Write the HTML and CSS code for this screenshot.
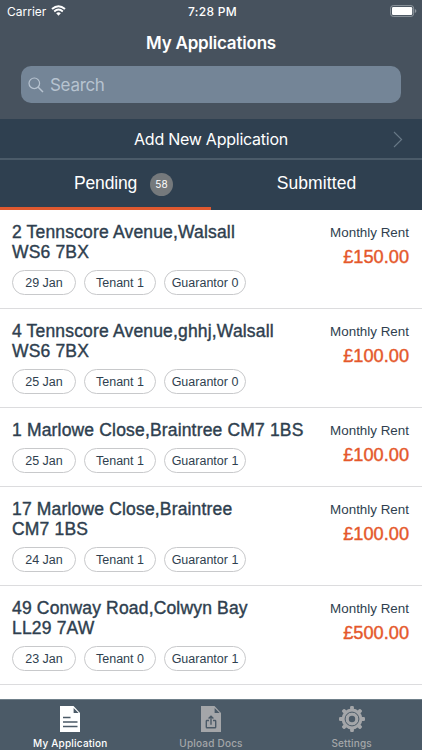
FILE: index.html
```
<!DOCTYPE html>
<html lang="en">
<head>
    <meta charset="utf-8">
    <meta name="viewport" content="width=device-width, initial-scale=1">
    <title>My Applications</title>
    <link rel="stylesheet" href="styles.css">
</head>
<body>
    <header class="header">
        <div class="status-bar">
            <div class="carrier">
                <span>Carrier</span>
                <svg class="wifi" width="15" height="11" viewBox="0 0 15 11">
                    <path d="M1 4 Q7.5 -1.6 14 4" fill="none" stroke="#fff" stroke-width="2"/>
                    <path d="M3.2 6.4 Q7.5 2.8 11.8 6.4" fill="none" stroke="#fff" stroke-width="1.9"/>
                    <path d="M5.2 8.3 Q7.5 6.4 9.8 8.3 L7.5 10.7Z" fill="#fff"/>
                </svg>
            </div>
            <span class="time">7:28 PM</span>
            <svg class="battery" width="27" height="12" viewBox="0 0 27 12">
                <rect x="0.6" y="0.6" width="23" height="10.8" rx="2.6" fill="none" stroke="#8f979e" stroke-width="1"/>
                <rect x="2" y="2" width="20.2" height="8" rx="1.2" fill="#fff"/>
                <path d="M24.8 4 Q26.4 4.6 26.4 6 Q26.4 7.4 24.8 8Z" fill="#8f979e"/>
            </svg>
        </div>
        <h1>My Applications</h1>
        <div class="search">
            <svg width="16" height="16" viewBox="0 0 16 16" fill="none" stroke="#b7c3d0" stroke-width="1.2">
                <circle cx="6.3" cy="6.3" r="5.3"/>
                <path d="M10.2 10.2 L15 15" stroke-width="1.5"/>
            </svg>
            <span>Search</span>
        </div>
    </header>

    <a class="add-new">
        <span>Add New Application</span>
        <svg class="chevron" width="10" height="17" viewBox="0 0 10 17">
            <path d="M1 1 L8.6 8.5 L1 16" fill="none" stroke="#687987" stroke-width="1.1"/>
        </svg>
    </a>

    <nav class="tabs">
        <div class="tab active"><span class="pending">Pending</span><span class="badge">58</span></div>
        <div class="tab"><span class="submitted">Submitted</span></div>
    </nav>

    <main class="list">
        <div class="row">
            <div class="info">
                <h2>2 Tennscore Avenue,Walsall<br>WS6 7BX</h2>
                <div class="chips"><span class="chip date">29 Jan</span><span class="chip tenant">Tenant 1</span><span class="chip guarantor">Guarantor 0</span></div>
            </div>
            <div class="rent"><p>Monthly Rent</p><strong>£150.00</strong></div>
        </div>
        <div class="row">
            <div class="info">
                <h2>4 Tennscore Avenue,ghhj,Walsall<br>WS6 7BX</h2>
                <div class="chips"><span class="chip date">25 Jan</span><span class="chip tenant">Tenant 1</span><span class="chip guarantor">Guarantor 0</span></div>
            </div>
            <div class="rent"><p>Monthly Rent</p><strong>£100.00</strong></div>
        </div>
        <div class="row">
            <div class="info">
                <h2>1 Marlowe Close,Braintree CM7 1BS</h2>
                <div class="chips"><span class="chip date">25 Jan</span><span class="chip tenant">Tenant 1</span><span class="chip guarantor">Guarantor 1</span></div>
            </div>
            <div class="rent"><p>Monthly Rent</p><strong>£100.00</strong></div>
        </div>
        <div class="row">
            <div class="info">
                <h2>17 Marlowe Close,Braintree<br>CM7 1BS</h2>
                <div class="chips"><span class="chip date">24 Jan</span><span class="chip tenant">Tenant 1</span><span class="chip guarantor">Guarantor 1</span></div>
            </div>
            <div class="rent"><p>Monthly Rent</p><strong>£100.00</strong></div>
        </div>
        <div class="row">
            <div class="info">
                <h2>49 Conway Road,Colwyn Bay<br>LL29 7AW</h2>
                <div class="chips"><span class="chip date">23 Jan</span><span class="chip tenant">Tenant 0</span><span class="chip guarantor">Guarantor 1</span></div>
            </div>
            <div class="rent"><p>Monthly Rent</p><strong>£500.00</strong></div>
        </div>
    </main>

    <footer class="tab-bar">
        <div class="item selected">
            <svg width="26" height="28" viewBox="0 0 26 28">
                <path d="M3 1 H16.5 L23 8 V27 H3Z" fill="#fff"/>
                <path d="M16.6 3 V8 H21.6Z" fill="#4b5a67"/>
                <path d="M6 12.5 H13.5 M6 17 H20.5 M6 21.5 H20.5" stroke="#4b5a67" stroke-width="1.7"/>
            </svg>
            <span>My Application</span>
        </div>
        <div class="item">
            <svg width="26" height="28" viewBox="0 0 26 28">
                <path d="M3 1 H16.5 L23 8 V27 H3Z" fill="#a4a6a9"/>
                <path d="M16.6 3 V8 H21.6Z" fill="#4b5a67"/>
                <path d="M11 15.5 H9 Q8.3 15.5 8.3 16.2 V22 Q8.3 22.8 9 22.8 H17 Q17.7 22.8 17.7 22 V16.2 Q17.7 15.5 17 15.5 H15 M13 19.8 V11.8 M10.6 13.6 L13 11.2 L15.4 13.6" fill="none" stroke="#4b5a67" stroke-width="1.4"/>
            </svg>
            <span>Upload Docs</span>
        </div>
        <div class="item">
            <svg width="26" height="28" viewBox="0 0 26 28">
                <g fill="#a4a6a9">
                    <circle cx="13" cy="14" r="10.4"/>
                    <rect x="11.1" y="1" width="3.8" height="26" rx="1.2"/>
                    <rect x="11.1" y="1" width="3.8" height="26" rx="1.2" transform="rotate(45 13 14)"/>
                    <rect x="11.1" y="1" width="3.8" height="26" rx="1.2" transform="rotate(90 13 14)"/>
                    <rect x="11.1" y="1" width="3.8" height="26" rx="1.2" transform="rotate(135 13 14)"/>
                </g>
                <circle cx="13" cy="14" r="6.9" fill="none" stroke="#4b5a67" stroke-width="1"/>
                <circle cx="13" cy="14" r="3.2" fill="#4b5a67"/>
            </svg>
            <span>Settings</span>
        </div>
    </footer>
</body>
</html>
```

FILE: styles.css
```
* {
    box-sizing: border-box;
}

body {
    margin: 0;
    height: 750px;
    display: flex;
    flex-direction: column;
    overflow: hidden;
    background-color: #fff;
    color: #2f3f4f;
    font-family: "Liberation Sans", Arial, sans-serif;
    white-space: nowrap;
}

.header {
    height: 119px;
    background-color: #47525e;
    color: #fff;
    font-family: Inter, sans-serif;
}

.status-bar {
    display: grid;
    grid-template-columns: 1fr auto 1fr;
    align-items: center;
    height: 22px;
    padding: 0 5px 0 7px;
    font-size: 12px;
}

.carrier {
    display: flex;
    align-items: center;
    gap: 5px;
}

.wifi {
    margin-top: -1px;
}

.time {
    padding-left: 1px;
    font-weight: 500;
    letter-spacing: 0.3px;
}

.battery {
    justify-self: end;
    margin-top: -1px;
}

h1 {
    margin: 0;
    height: 44px;
    line-height: 43px;
    text-align: center;
    font-size: 17px;
    font-weight: 600;
    letter-spacing: -0.2px;
}

.search {
    display: flex;
    align-items: center;
    gap: 6px;
    height: 37px;
    margin: 0 21px;
    padding: 0 7px;
    border-radius: 10px;
    background-color: #748597;
    color: #b7c3d0;
    font-size: 17px;
    letter-spacing: -0.3px;
}

.add-new {
    display: flex;
    align-items: center;
    justify-content: center;
    height: 41px;
    border-bottom: 2px solid #4b5b69;
    background-color: #2f4050;
    color: #fff;
    font-family: Inter, sans-serif;
    font-size: 16px;
    letter-spacing: -0.25px;
    position: relative;
}

.chevron {
    position: absolute;
    right: 19px;
    top: 12px;
}

.tabs {
    display: flex;
    height: 50px;
    background-color: #2f4050;
    color: #fff;
    font-size: 17.5px;
}

.tab {
    width: 211px;
    display: flex;
    align-items: center;
    justify-content: center;
    border-bottom: 3px solid transparent;
}

.tab.active {
    justify-content: flex-start;
    padding-left: 74px;
    gap: 13px;
    border-bottom-color: #e0592f;
}

.pending {
    width: 63px;
    letter-spacing: -0.15px;
}

.submitted {
    letter-spacing: 0.1px;
}

.badge {
    width: 23px;
    height: 23px;
    margin-top: 2px;
    border-radius: 50%;
    background-color: #75797c;
    font-family: Inter, sans-serif;
    font-size: 10px;
    line-height: 23px;
    text-align: center;
}

.list {
    flex: 1;
    overflow: hidden;
}

.row {
    display: flex;
    justify-content: space-between;
    padding: 12px 13px 13px 12px;
    border-bottom: 1px solid #dcdcde;
}

h2 {
    margin: 0 0 8px;
    font-size: 17.5px;
    font-weight: normal;
    line-height: 20px;
    letter-spacing: 0.17px;
    -webkit-text-stroke: 0.4px #2f3f4f;
}

.chips {
    display: flex;
    gap: 8px;
}

.chip {
    height: 25px;
    border: 1px solid #c8c9cb;
    border-radius: 13px;
    font-size: 12.5px;
    line-height: 24px;
    text-align: center;
}

.date {
    width: 64px;
}

.tenant {
    width: 72px;
}

.guarantor {
    width: 82px;
}

.rent {
    text-align: right;
}

.rent p {
    margin: 2px 0 4px;
    font-size: 13.4px;
    line-height: 18px;
}

.rent strong {
    display: block;
    color: #e5582b;
    font-size: 18.2px;
    font-weight: normal;
    line-height: 22px;
    -webkit-text-stroke: 0.4px #e5582b;
}

.tab-bar {
    display: flex;
    height: 51px;
    padding-top: 6px;
    border-top: 1px solid #70808a;
    background-color: #4b5a67;
}

.item {
    flex: 1;
    display: flex;
    flex-direction: column;
    align-items: center;
    color: #a4a6a9;
    font-family: Inter, sans-serif;
    font-size: 10px;
    font-weight: 500;
    letter-spacing: 0.2px;
}

.item span {
    margin-top: 4px;
    line-height: 13px;
}

.item svg {
    margin-top: -1px;
}

.selected {
    color: #fff;
}
```
